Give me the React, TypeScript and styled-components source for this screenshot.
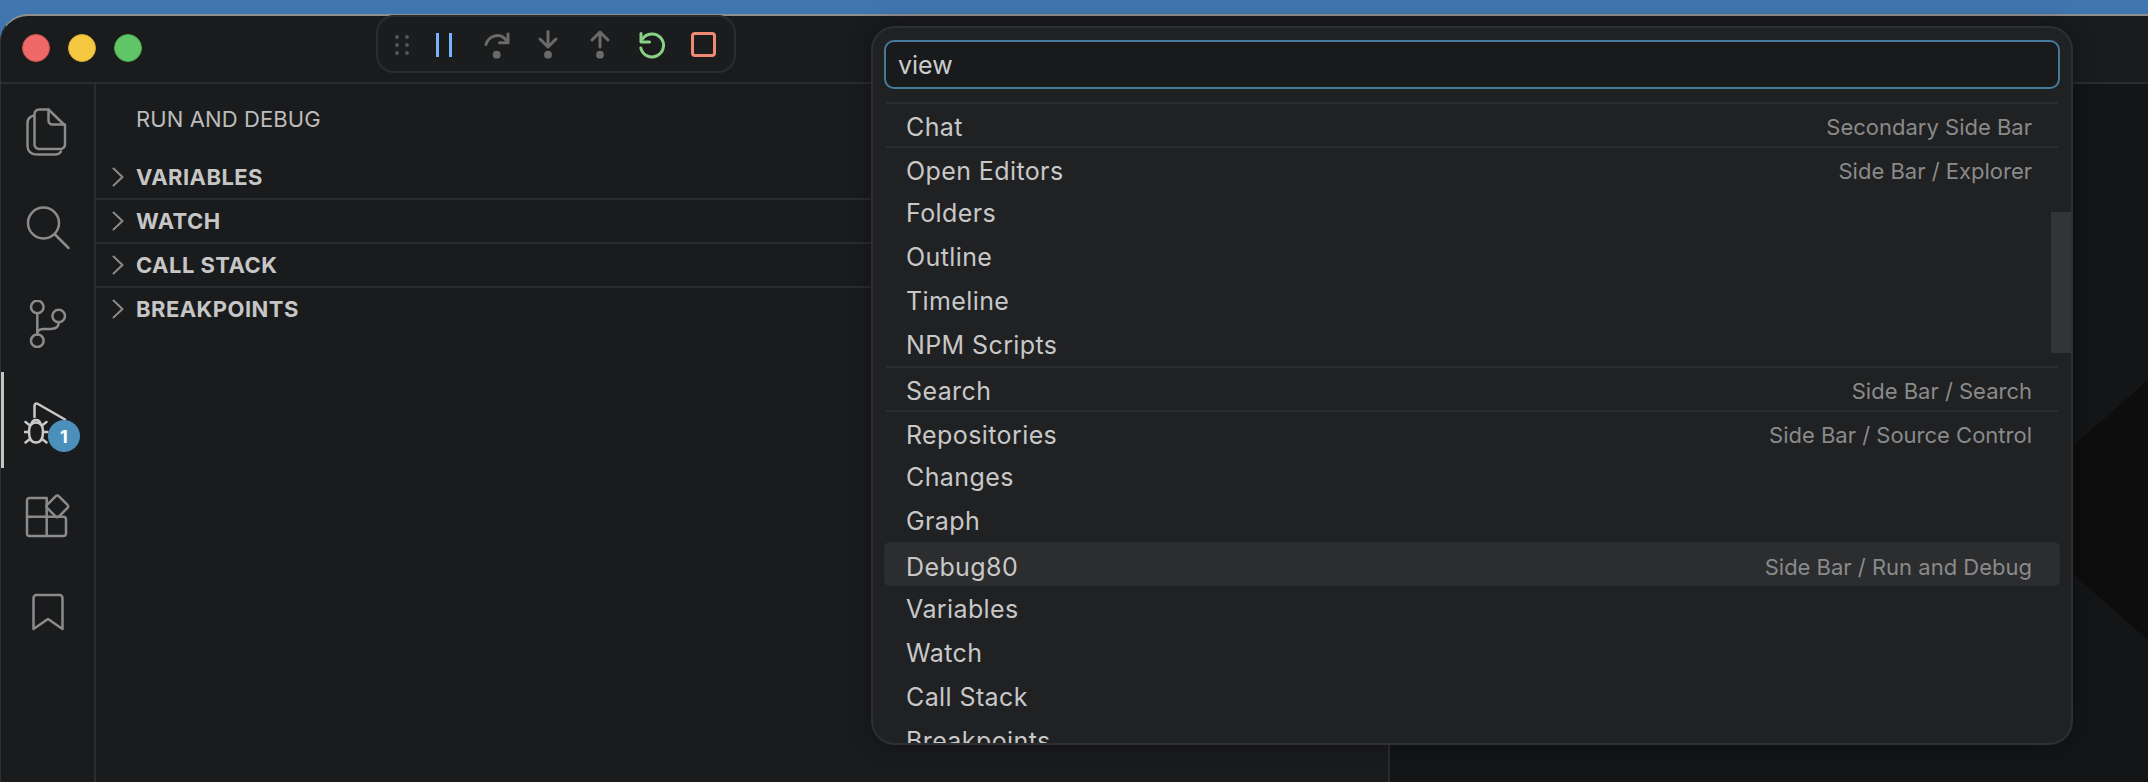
import React from "react";
import styled, { createGlobalStyle } from "styled-components";

const GlobalStyle = createGlobalStyle`
  html, body {
    margin: 0;
    padding: 0;
    background: #3f76ae;
    overflow: hidden;
  }
  * {
    box-sizing: border-box;
  }
`;

const Desktop = styled.div`
  position: relative;
  width: 2148px;
  height: 782px;
  padding-top: 14px;
  overflow: hidden;
  font-family: Inter, "Noto Sans", "Liberation Sans", sans-serif;
`;

const Window = styled.div`
  display: flex;
  flex-direction: column;
  height: 768px;
  background: #1a1b1d;
  border-top: 2px solid #8e8e8e;
  border-left: 1px solid #2f3032;
  border-top-left-radius: 28px;
  overflow: hidden;
`;

const TitleBar = styled.div`
  display: flex;
  align-items: center;
  flex: none;
  gap: 18px;
  height: 68px;
  padding: 0 0 2px 21px;
  border-bottom: 2px solid #2b2c2e;
`;

const Light = styled.span<{ $color: string; $edge: string }>`
  width: 28px;
  height: 28px;
  border-radius: 50%;
  background: ${({ $color }) => $color};
  border: 1px solid ${({ $edge }) => $edge};
`;

const Main = styled.div`
  display: flex;
  flex: 1;
  min-height: 0;
`;

const ActivityBar = styled.nav`
  flex: none;
  width: 95px;
  border-right: 2px solid #2b2c2e;
`;

const ActivityItem = styled.div<{ $active?: boolean }>`
  position: relative;
  display: flex;
  align-items: center;
  justify-content: center;
  height: 96px;
  color: ${({ $active }) => ($active ? "#c8c8c8" : "#8b8b8b")};
  border-left: 4px solid ${({ $active }) => ($active ? "#c4c4c4" : "transparent")};
  margin-left: -1px;
  padding-right: 2px;
`;

const Badge = styled.span`
  position: absolute;
  left: 44px;
  top: 48px;
  display: flex;
  align-items: center;
  justify-content: center;
  width: 32px;
  height: 32px;
  border-radius: 50%;
  background: #4b90bb;
  color: #ffffff;
  font-size: 18px;
  font-weight: 700;
`;

const SideBar = styled.aside`
  flex: none;
  width: 1294px;
  border-right: 2px solid #2b2c2e;
`;

const SideTitle = styled.div`
  display: flex;
  align-items: center;
  height: 70px;
  padding-left: 40px;
  color: #bcbcbc;
  font-size: 22px;
  letter-spacing: 0.1px;
`;

const Section = styled.div<{ $first?: boolean }>`
  display: flex;
  align-items: center;
  height: 44px;
  padding-left: 16px;
  gap: 12px;
  color: #c6c6c6;
  font-size: 22px;
  font-weight: 700;
  letter-spacing: 0.45px;
  border-top: 2px solid ${({ $first }) => ($first ? "transparent" : "#2b2c2e")};
`;

const Editor = styled.main`
  position: relative;
  flex: 1;
  background: #141517;
`;

const Watermark = styled.svg`
  position: absolute;
  inset: 0;
  width: 100%;
  height: 100%;
`;

const DebugToolbar = styled.div`
  position: absolute;
  left: 376px;
  top: 15px;
  display: flex;
  align-items: center;
  width: 360px;
  height: 58px;
  padding: 1px 0 0 16px;
  background: #1b1c1e;
  border: 2px solid #2b2c2e;
  border-radius: 18px;
`;

const Grip = styled.svg`
  width: 16px;
  height: 24px;
  margin-right: 8px;
  color: #585858;
`;

const ToolButton = styled.div<{ $color: string }>`
  display: flex;
  align-items: center;
  justify-content: center;
  width: 52px;
  height: 36px;
  color: ${({ $color }) => $color};
`;

const Picker = styled.div`
  position: absolute;
  left: 871px;
  top: 26px;
  width: 1202px;
  height: 719px;
  padding: 12px 11px 0;
  background: #202123;
  border: 2px solid #2e2f31;
  border-radius: 24px;
  box-shadow: 0 0 24px rgba(0, 0, 0, 0.32);
  overflow: hidden;
`;

const SearchBox = styled.div`
  display: flex;
  align-items: center;
  height: 49px;
  padding: 1px 12px 0;
  background: #191a1c;
  border: 2px solid #47799d;
  border-radius: 10px;
  color: #cccccc;
  font-size: 25px;
`;

const List = styled.div`
  margin-top: 13px;
`;

const Row = styled.div<{ $separator?: boolean; $focused?: boolean }>`
  position: relative;
  display: flex;
  align-items: center;
  justify-content: space-between;
  height: 44px;
  padding: ${({ $separator, $focused }) => ($separator || $focused ? "5px" : "2px")} 28px 0 22px;
  border-radius: 6px;
  background: ${({ $focused }) => ($focused ? "#2c2d2f" : "transparent")};

  &::before {
    content: ${({ $separator }) => ($separator ? '""' : "none")};
    position: absolute;
    top: 0;
    left: 2px;
    right: 2px;
    height: 2px;
    background: #2b2c2e;
  }
`;

const RowLabel = styled.span`
  color: #c8c8c8;
  font-size: 25px;
  letter-spacing: 0.4px;
`;

const RowDescription = styled.span`
  color: #8a8a8a;
  font-size: 22px;
`;

const ScrollThumb = styled.div`
  position: absolute;
  right: 0;
  top: 184px;
  width: 20px;
  height: 141px;
  background: #333436;
`;

const stroke = {
  fill: "none",
  stroke: "currentColor",
  strokeWidth: 2.5,
  strokeLinecap: "round" as const,
  strokeLinejoin: "round" as const,
};

const FilesIcon = () => (
  <svg width="48" height="48" viewBox="0 0 48 48" {...stroke}>
    <path d="M15 1.5H24.5L41 17.5V36.5A4.5 4.5 0 0 1 36.5 41H15A4.5 4.5 0 0 1 10.5 36.5V6A4.5 4.5 0 0 1 15 1.5Z" />
    <path d="M24.5 1.5V12.5A4 4 0 0 0 28.5 16.5H41" />
    <path d="M10 7.5C5.5 8.5 3.5 11 3.5 15V37.5C3.5 43 7 46.5 12.5 46.5H31C34 46.5 36 45.5 37 43.5" />
  </svg>
);

const SearchIcon = () => (
  <svg width="48" height="48" viewBox="0 0 48 48" {...stroke}>
    <circle cx="19.5" cy="19" r="15.5" />
    <path d="M31 30.5L44.5 44" />
  </svg>
);

const BranchIcon = () => (
  <svg width="48" height="48" viewBox="0 0 48 48" {...stroke}>
    <circle cx="13.3" cy="7" r="6.3" />
    <circle cx="34.7" cy="16" r="6.3" />
    <circle cx="13.3" cy="40.7" r="6.3" />
    <path d="M13.3 13.3V34.4" />
    <path d="M34.7 22.3C34.7 27 31.5 29 27 29H19.5C15.5 29 13.3 31 13.3 34" />
  </svg>
);

const DebugIcon = () => (
  <svg width="48" height="48" viewBox="0 0 48 48" {...stroke}>
    <path d="M10.5 21V10C10.5 8 12 7 14 8L41 23.5" />
    <path d="M12 26.5C16.5 26.5 19 30 19 35.5C19 43 16 46.5 12 46.5C8 46.5 5 43 5 35.5C5 30 7.5 26.5 12 26.5Z" />
    <path d="M6 29.5L1.5 26M18 29.5L22.5 26M5 36H0.5M19 36H23.5M6 43L1.5 46.5M18 43L22.5 46.5" />
    <path d="M7.5 28C8 25.5 9.5 24 12 24C14.5 24 16 25.5 16.5 28" />
  </svg>
);

const ExtensionsIcon = () => (
  <svg width="48" height="48" viewBox="0 0 48 48" {...stroke}>
    <path d="M5.5 6H22.7V44H5.5A2.5 2.5 0 0 1 3 41.5V8.5A2.5 2.5 0 0 1 5.5 6Z" />
    <path d="M3 24.7H39.5A2.5 2.5 0 0 1 42 27.2V41.5A2.5 2.5 0 0 1 39.5 44H22.7" />
    <path d="M31.8 4.2A2 2 0 0 1 34.8 4.2L43.5 12.9A2 2 0 0 1 43.5 15.9L34.8 24.6A2 2 0 0 1 31.8 24.6L23.1 15.9A2 2 0 0 1 23.1 12.9Z" />
  </svg>
);

const BookmarkIcon = () => (
  <svg width="48" height="48" viewBox="0 0 48 48" {...stroke}>
    <path d="M9.5 41V10A3 3 0 0 1 12.5 7H35.5A3 3 0 0 1 38.5 10V41L24 31Z" />
  </svg>
);

const Chevron = () => (
  <svg width="12" height="20" viewBox="0 0 12 20" fill="none" stroke="#8a8a8a" strokeWidth="2" strokeLinecap="round" strokeLinejoin="round">
    <path d="M1.5 1.5L10.5 10L1.5 18.5" />
  </svg>
);

const toolIcon = { width: 36, height: 36, viewBox: "0 0 36 36", ...stroke, strokeWidth: 3 };

const PauseIcon = () => (
  <svg {...toolIcon} strokeLinecap="butt">
    <path d="M11.5 6V30M24.5 6V30" />
  </svg>
);

const StepOverIcon = () => (
  <svg {...toolIcon}>
    <path d="M8 17.5C9.5 10 22 3 29.5 15" />
    <path d="M30 7V15.7H21.5" />
    <circle cx="18.7" cy="27.7" r="3.9" fill="currentColor" stroke="none" />
  </svg>
);

const StepIntoIcon = () => (
  <svg {...toolIcon}>
    <path d="M18 4.5V20M10 12L18 20L26 12" />
    <circle cx="18" cy="27.7" r="3.9" fill="currentColor" stroke="none" />
  </svg>
);

const StepOutIcon = () => (
  <svg {...toolIcon}>
    <path d="M18 20V5M10 13L18 5L26 13" />
    <circle cx="18" cy="27.7" r="3.9" fill="currentColor" stroke="none" />
  </svg>
);

const RestartIcon = () => (
  <svg {...toolIcon}>
    <path d="M8.5 12A11.5 11.5 0 1 1 6.8 21" />
    <path d="M7 6.5V15H15.5" />
  </svg>
);

const StopIcon = () => (
  <svg {...toolIcon} strokeWidth={3}>
    <rect x="6.5" y="6.5" width="22" height="22" rx="2.5" />
  </svg>
);

const sections = ["VARIABLES", "WATCH", "CALL STACK", "BREAKPOINTS"];

type PickerRow = {
  label: string;
  description?: string;
  separator?: boolean;
  focused?: boolean;
};

const rows: PickerRow[] = [
  { label: "Chat", description: "Secondary Side Bar", separator: true },
  { label: "Open Editors", description: "Side Bar / Explorer", separator: true },
  { label: "Folders" },
  { label: "Outline" },
  { label: "Timeline" },
  { label: "NPM Scripts" },
  { label: "Search", description: "Side Bar / Search", separator: true },
  { label: "Repositories", description: "Side Bar / Source Control", separator: true },
  { label: "Changes" },
  { label: "Graph" },
  { label: "Debug80", description: "Side Bar / Run and Debug", focused: true },
  { label: "Variables" },
  { label: "Watch" },
  { label: "Call Stack" },
  { label: "Breakpoints" },
];

const App = () => {
  return (
    <Desktop>
      <GlobalStyle />
      <Window>
        <TitleBar>
          <Light $color="#ee6a6a" $edge="#d4524f" />
          <Light $color="#f4c840" $edge="#d9ab2c" />
          <Light $color="#5fc566" $edge="#49ac4e" />
        </TitleBar>
        <Main>
          <ActivityBar>
            <ActivityItem><FilesIcon /></ActivityItem>
            <ActivityItem><SearchIcon /></ActivityItem>
            <ActivityItem><BranchIcon /></ActivityItem>
            <ActivityItem $active>
              <DebugIcon />
              <Badge>1</Badge>
            </ActivityItem>
            <ActivityItem><ExtensionsIcon /></ActivityItem>
            <ActivityItem><BookmarkIcon /></ActivityItem>
          </ActivityBar>
          <SideBar>
            <SideTitle>RUN AND DEBUG</SideTitle>
            {sections.map((name, i) => (
              <Section key={name} $first={i === 0}>
                <Chevron />
                {name}
              </Section>
            ))}
          </SideBar>
          <Editor>
            <Watermark viewBox="0 0 758 698" preserveAspectRatio="none">
              <polygon points="610,426 758,296 758,556" fill="#0d0d0e" />
            </Watermark>
          </Editor>
        </Main>
      </Window>

      <DebugToolbar>
        <Grip viewBox="0 0 16 24" fill="currentColor">
          <circle cx="3" cy="4" r="1.9" />
          <circle cx="13" cy="4" r="1.9" />
          <circle cx="3" cy="12" r="1.9" />
          <circle cx="13" cy="12" r="1.9" />
          <circle cx="3" cy="20" r="1.9" />
          <circle cx="13" cy="20" r="1.9" />
        </Grip>
        <ToolButton $color="#78b4fb"><PauseIcon /></ToolButton>
        <ToolButton $color="#6a6a6a"><StepOverIcon /></ToolButton>
        <ToolButton $color="#6a6a6a"><StepIntoIcon /></ToolButton>
        <ToolButton $color="#6a6a6a"><StepOutIcon /></ToolButton>
        <ToolButton $color="#89d185"><RestartIcon /></ToolButton>
        <ToolButton $color="#ef8a75"><StopIcon /></ToolButton>
      </DebugToolbar>

      <Picker>
        <SearchBox>view</SearchBox>
        <List>
          {rows.map((row) => (
            <Row key={row.label} $separator={row.separator} $focused={row.focused}>
              <RowLabel>{row.label}</RowLabel>
              {row.description && <RowDescription>{row.description}</RowDescription>}
            </Row>
          ))}
        </List>
        <ScrollThumb />
      </Picker>
    </Desktop>
  );
};

export default App;
